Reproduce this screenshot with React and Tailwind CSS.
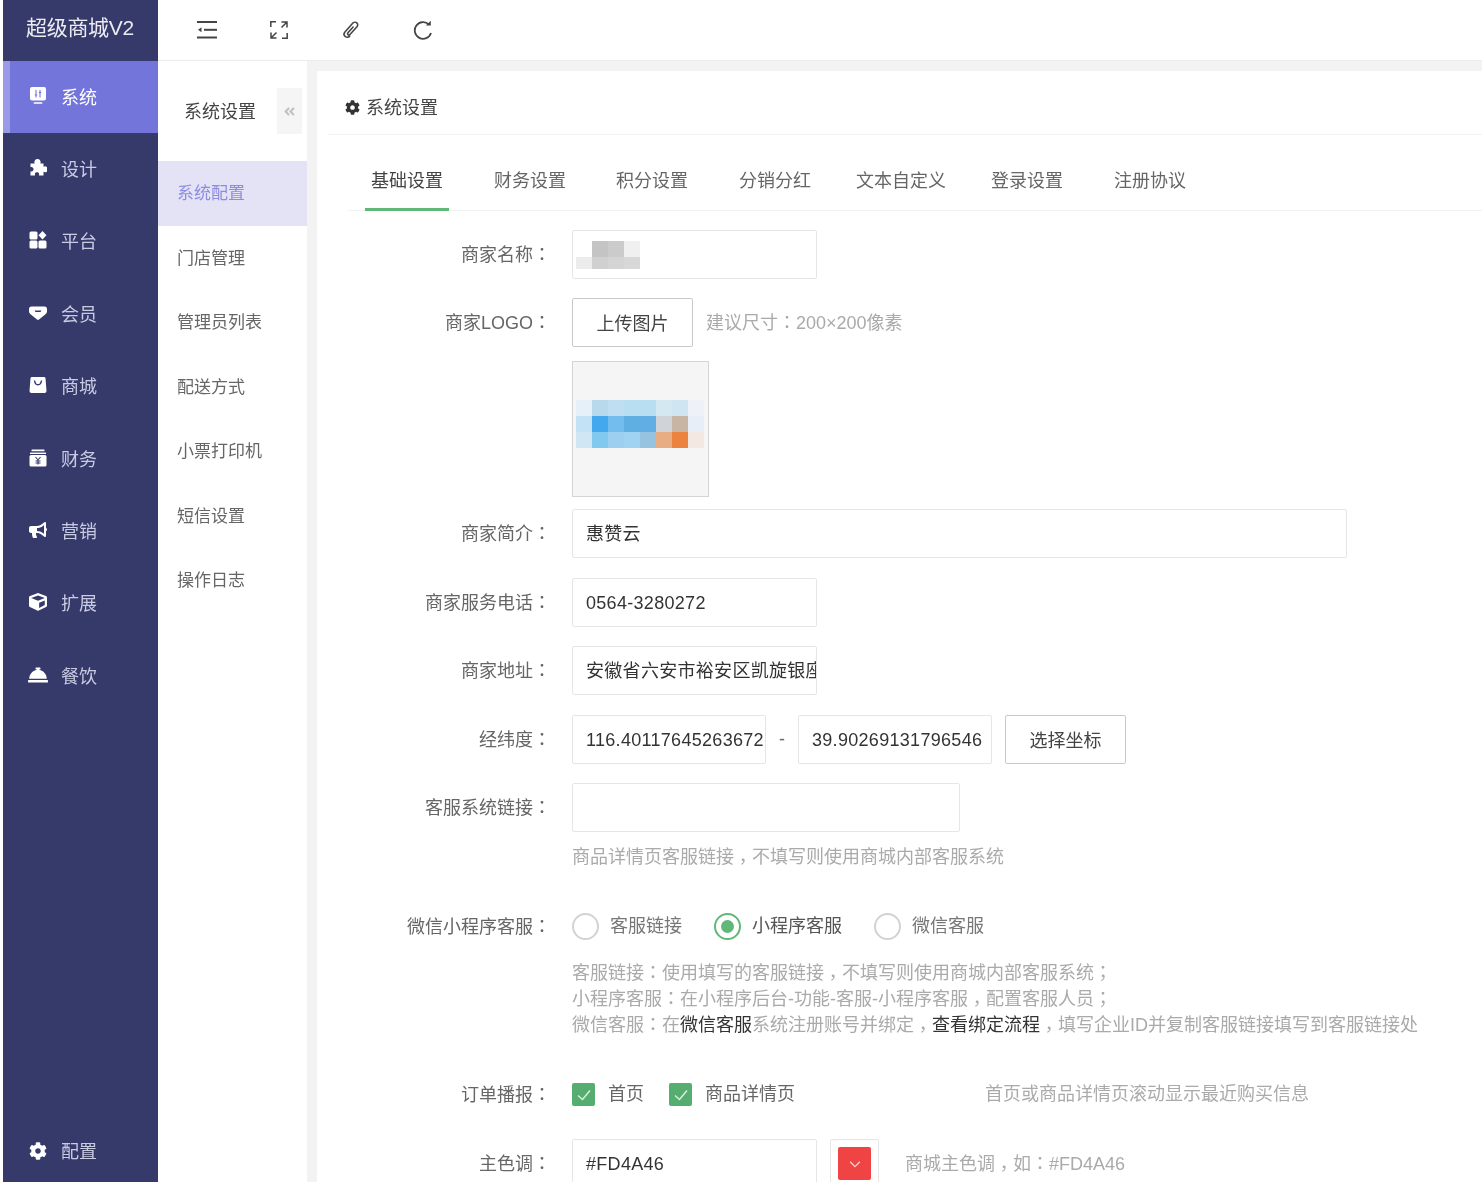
import React from "react";
import { FaBullhorn, FaCube, FaConciergeBell, FaCog, FaAngleDoubleLeft } from "react-icons/fa";

const IconMonitor = () => (
  <svg viewBox="0 0 18 18" className="w-[18px] h-[18px]">
    <rect x="1" y="0" width="16" height="13.5" rx="2" fill="#fff" />
    <rect x="4.5" y="15.2" width="9" height="1.6" rx="0.8" fill="#fff" />
    <path d="M7 3v7.500M11 3v7.500M5.800 8h2.400M9.800 5.500h2.400" stroke="#7475da" strokeWidth="1.100" fill="none" />
  </svg>
);
const IconPuzzle = () => (
  <svg viewBox="0 0 18 18" className="w-[18px] h-[18px]" fill="#fff">
    <path d="M1.500 4.500h4.200a3.100 3.100 0 1 1 5.600 0h3.200v3.300a2.900 2.900 0 1 1 0 5v3.700h-4.600c.8-2.300-.4-3.300-1.900-3.300s-2.700 1-1.900 3.300H1.500v-4.300c1.800.6 3-.3 3-1.900S3.300 7.600 1.500 8.200z" />
  </svg>
);
const IconGrid = () => (
  <svg viewBox="0 0 18 18" className="w-[18px] h-[18px]" fill="#fff">
    <rect x="0.500" y="0.500" width="8" height="8" rx="1.500" />
    <path d="M13.500 0 17.500 4.200l-4 4.300-4-4.300z" />
    <rect x="0.500" y="9.500" width="8" height="8" rx="1.500" />
    <rect x="9.500" y="9.500" width="8" height="8" rx="1.500" />
  </svg>
);
const IconGem = () => (
  <svg viewBox="0 0 20 18" className="w-[20px] h-[18px]">
    <path d="M3.500 2.500h13a2.500 2.500 0 0 1 2.500 2.500v2.500c0 1-.4 1.700-1.200 2.400L11 15.500c-.6.500-1.400.500-2 0L2.200 9.900C1.400 9.200 1 8.500 1 7.500V5a2.500 2.500 0 0 1 2.500-2.500z" fill="#fff" />
    <path d="M6.500 6.500h7l-1 1.500h-5z" fill="#363a6b" />
  </svg>
);
const IconBag = () => (
  <svg viewBox="0 0 18 18" className="w-[18px] h-[18px]">
    <path d="M3 1h12a1.500 1.500 0 0 1 1.500 1.300L17.500 15a2 2 0 0 1-2 2h-13a2 2 0 0 1-2-2L1.500 2.300A1.500 1.500 0 0 1 3 1z" fill="#fff" />
    <path d="M5.500 4.500c.4 3 1.700 4.300 3.500 4.300s3.100-1.300 3.500-4.300" stroke="#363a6b" strokeWidth="1.400" fill="none" />
  </svg>
);
const IconCash = () => (
  <svg viewBox="0 0 18 18" className="w-[18px] h-[18px]">
    <rect x="2.500" y="0.500" width="13" height="1.800" rx="0.500" fill="#fff" />
    <rect x="1" y="3.600" width="16" height="1.400" fill="#fff" />
    <rect x="0.500" y="6" width="17" height="11.500" rx="1.500" fill="#fff" />
    <path d="M6.500 8 9 11l2.500-3M9 11v4.500M6.500 12h5M6.500 14h5" stroke="#363a6b" strokeWidth="1.100" fill="none" />
  </svg>
);
const IconOutdent = () => (
  <svg viewBox="0 0 20 18" className="w-[20px] h-[18px]" fill="#444">
    <rect x="0" y="0" width="20" height="2" />
    <rect x="7" y="7.800" width="13" height="2" />
    <rect x="0" y="15.500" width="20" height="2" />
    <path d="M4.500 6.300v5L1 8.800z" />
  </svg>
);
const IconFull = () => (
  <svg viewBox="0 0 18 18" className="w-[18px] h-[18px]" fill="none" stroke="#444" strokeWidth="1.500">
    <path d="M0.800 6V0.800H6" />
    <path d="M17.200 12v5.200H12" />
    <path d="M11.500 1h5.500v5.500M17 1l-5.500 5.500" />
    <path d="M1 11.500V17h5.500M1 17l5.500-5.500" />
  </svg>
);
const IconClip = () => (
  <svg viewBox="0 0 24 24" className="w-[22px] h-[22px] shrink-0" fill="none" stroke="#444" strokeWidth="1.700" strokeLinecap="round" strokeLinejoin="round">
    <g transform="rotate(42 12 12)">
      <path d="M11.500 8v8.500a1.500 1.500 0 0 0 3 0V5a3 3 0 0 0-6 0v13a3.500 3.500 0 0 0 7 0" />
    </g>
  </svg>
);
const IconReload = () => (
  <svg viewBox="0 0 20 20" className="w-[20px] h-[20px]" fill="none" stroke="#444" strokeWidth="1.800">
    <path d="M16 4.600A8.300 8.300 0 1 0 18 13" />
    <path d="M12.800 5.600h5V0.800z" fill="#444" stroke="none" />
  </svg>
);

const navItems = [
  { label: "系统", icon: <IconMonitor />, active: true },
  { label: "设计", icon: <IconPuzzle /> },
  { label: "平台", icon: <IconGrid /> },
  { label: "会员", icon: <IconGem /> },
  { label: "商城", icon: <IconBag /> },
  { label: "财务", icon: <IconCash /> },
  { label: "营销", icon: <FaBullhorn size={18} color="#fff" /> },
  { label: "扩展", icon: <FaCube size={18} color="#fff" /> },
  { label: "餐饮", icon: <FaConciergeBell size={20} color="#fff" /> },
];
const subItems = ["门店管理", "管理员列表", "配送方式", "小票打印机", "短信设置", "操作日志"];
const tabs = [
  ["基础设置", "ml-0", true],
  ["财务设置", "ml-[39px]"],
  ["积分设置", "ml-[38px]"],
  ["分销分红", "ml-[39px]"],
  ["文本自定义", "ml-[33px]"],
  ["登录设置", "ml-[33px]"],
  ["注册协议", "ml-[39px]"],
];
const pixels = [
  ["#e6f0f8", "#b8d8ec", "#c0def2", "#b8def2", "#b8def2", "#d4e8f2", "#cfe5f1", "#eef2f8"],
  ["#c4e2f5", "#44a8ee", "#73bdee", "#5fafe2", "#60aee4", "#d0d4d8", "#c9b5a4", "#e8eef8"],
  ["#d0e6f5", "#82c9f0", "#9ccff0", "#a0d2f2", "#96c4e0", "#e9ad84", "#ec8440", "#f4e8e2"],
];

// Centred full-width punctuation, as in the picture
const T = ({ children }) => (
  <>
    {String(children).split(/([：，；])/).map((s, i) =>
      i % 2 ? (
        <span key={i} className={`inline-block leading-[0] font-['Noto_Sans_CJK_TC'] ${s === "，" ? "translate-y-[5px]" : ""}`}>{s}</span>
      ) : s
    )}
  </>
);
const Label = ({ children }) => (
  <div className="w-[234px] shrink-0 text-right text-[#666] leading-[24px] pt-[1px]"><T>{children}</T></div>
);
const Field = ({ w = "w-[245px]", value }) => (
  <div className={`${w} h-[49px] border border-[#e6e6e6] rounded-[2px] pl-[13px] pt-[2px] flex items-center text-[#333] whitespace-nowrap overflow-hidden tracking-[0.3px]`}>
    {value}
  </div>
);
const Button = ({ children, w = "w-[121px]" }) => (
  <div className={`${w} h-[49px] border border-[#c9c9c9] rounded-[2px] pt-[3px] flex items-center justify-center text-[#444] shrink-0`}>
    {children}
  </div>
);
const Row = ({ label, mt, children }) => (
  <div className={`flex items-center ${mt}`}>
    <Label>{label}</Label>
    <div className="ml-[21px] flex items-center">{children}</div>
  </div>
);
const Radio = ({ on, label, cls }) => (
  <div className={`flex items-center ${cls}`}>
    <div className={`w-[27px] h-[27px] rounded-full border-2 flex items-center justify-center ${on ? "border-[#5fb878]" : "border-[#d2d2d2]"}`}>
      {on && <div className="w-[13px] h-[13px] rounded-full bg-[#5fb878]" />}
    </div>
    <span className={`ml-[11px] pt-[1px] ${on ? "text-[#555]" : "text-[#777]"}`}>{label}</span>
  </div>
);
const Check = ({ label, cls }) => (
  <div className={`flex items-center ${cls}`}>
    <div className="w-[23px] h-[23px] rounded-[2px] bg-[#55ad70] flex items-center justify-center">
      <svg viewBox="0 0 16 16" className="w-[16px] h-[16px]" fill="none" stroke="#d8f0df" strokeWidth="1.500"><path d="M2 8.500 6.500 12.500l7.500-9" /></svg>
    </div>
    <span className="ml-[13px] text-[#666]">{label}</span>
  </div>
);

export default function App() {
  return (
    <div className="flex h-[1182px] overflow-hidden bg-white pl-[3px] text-[18px] blur-[0.6px]" style={{ fontFamily: '"Liberation Sans","Noto Sans CJK SC",sans-serif' }}>
      <aside className="w-[155px] shrink-0 bg-[#363a6b] flex flex-col">
        <div className="h-[61px] flex items-center pl-[23px] pb-[6px] text-white text-[21px] tracking-[-0.3px] opacity-90 whitespace-nowrap">超级商城V2</div>
        {navItems.map((n) => (
          <div key={n.label} className={`h-[72.4px] flex items-center ${n.active ? "bg-[#7475da] border-l-[7px] border-[#9a9be6] pl-[18px]" : "pl-[25px]"}`}>
            <span className="w-[20px] -mt-[3px] flex justify-center">{n.icon}</span>
            <span className={`ml-[13px] pt-[2px] ${n.active ? "text-white" : "text-[#c9cbe3]"}`}>{n.label}</span>
          </div>
        ))}
        <div className="mt-auto h-[62px] flex items-center pl-[25px]">
          <span className="w-[20px] flex justify-center"><FaCog size={18} color="#fff" /></span>
          <span className="ml-[13px] pt-[2px] text-[#c9cbe3]">配置</span>
        </div>
      </aside>

      <div className="flex-1 min-w-0 flex flex-col">
        <header className="h-[60px] shrink-0 flex items-center pl-[39px] gap-[52px]">
          <span className="w-[20px] flex justify-center"><IconOutdent /></span>
          <span className="w-[20px] flex justify-center"><IconFull /></span>
          <span className="w-[20px] flex justify-center"><IconClip /></span>
          <span className="w-[20px] flex justify-center"><IconReload /></span>
        </header>

        <div className="flex flex-1 min-h-0 border-t border-[#ececec]">
          <nav className="w-[149px] shrink-0 flex flex-col">
            <div className="h-[100px] flex items-center pt-[3px]">
              <span className="ml-[26px] text-[#444]">系统设置</span>
              <div className="ml-[21px] -mt-[3px] w-[25px] h-[46px] bg-[#f5f5f5] flex items-center justify-center">
                <FaAngleDoubleLeft size={13} color="#c0c0c0" />
              </div>
            </div>
            <div className="h-[65px] bg-[#e4e3f6] flex items-center pl-[19px] text-[17px] text-[#8d8ce0]">系统配置</div>
            {subItems.map((s) => (
              <div key={s} className="h-[64.5px] flex items-center pl-[19px] text-[17px] text-[#666] whitespace-nowrap">{s}</div>
            ))}
          </nav>

          <main className="flex-1 min-w-0 bg-[#f3f3f3] pl-[10px] pt-[10px]">
            <div className="bg-white h-full">
              <div className="ml-[11px] h-[64px] border-b border-[#f2f2f2] flex items-center pl-[17px] pt-[12px] text-[#444]">
                <FaCog size={15} color="#333" className="-mt-[2px]" />
                <span className="ml-[6px]">系统设置</span>
              </div>
              <div className="ml-[31px] h-[76px] border-b border-[#f2f2f2] flex pl-[17px]">
                {tabs.map(([t, m, on]) => (
                  <div key={t} className={`${m} px-[6px] h-[76px] flex items-center pt-[20px] whitespace-nowrap border-b-[3px] ${on ? "border-[#5fb878] text-[#444]" : "border-transparent text-[#666]"}`}>{t}</div>
                ))}
              </div>

              <Row label="商家名称：" mt="mt-[19px]">
                <Field value={
                  <div className="-ml-[10px] -mt-[2px] flex flex-col">
                    <div className="flex h-[16px]"><i className="w-[16px]" /><i className="w-[16px] bg-[#c4c4c4]" /><i className="w-[16px] bg-[#cbcbcb]" /><i className="w-[16px] bg-[#f0f0f0]" /></div>
                    <div className="flex h-[12px]"><i className="w-[16px] bg-[#ececec]" /><i className="w-[16px] bg-[#d0d0d0]" /><i className="w-[16px] bg-[#d4d4d4]" /><i className="w-[16px] bg-[#d8d8d8]" /></div>
                  </div>
                } />
              </Row>
              <Row label="商家LOGO：" mt="mt-[19px]">
                <Button>上传图片</Button>
                <span className="ml-[13px] leading-[24px] text-[#aaa] whitespace-nowrap"><T>建议尺寸：200×200像素</T></span>
              </Row>
              <div className="mt-[14px] ml-[255px] w-[137px] h-[136px] bg-[#f5f5f5] border border-[#d4d4d4] pt-[38px] pl-[3px]">
                {pixels.map((r, i) => (
                  <div key={i} className="flex">
                    {r.map((c, j) => <div key={j} className="w-[16px] h-[16px] shrink-0" style={{ background: c }} />)}
                  </div>
                ))}
              </div>
              <Row label="商家简介：" mt="mt-[12px]"><Field w="w-[775px]" value="惠赞云" /></Row>
              <Row label="商家服务电话：" mt="mt-[20px]"><Field value="0564-3280272" /></Row>
              <Row label="商家地址：" mt="mt-[19px]"><Field value="安徽省六安市裕安区凯旋银座" /></Row>
              <Row label="经纬度：" mt="mt-[20px]">
                <Field w="w-[194px]" value="116.40117645263672" />
                <span className="w-[32px] text-center text-[#666]">-</span>
                <Field w="w-[194px]" value="39.90269131796546" />
                <div className="ml-[13px]"><Button>选择坐标</Button></div>
              </Row>
              <Row label="客服系统链接：" mt="mt-[19px]"><Field w="w-[388px]" value="" /></Row>
              <div className="mt-[13px] ml-[255px] h-[24px] leading-[24px] text-[#aaa] whitespace-nowrap"><T>商品详情页客服链接，不填写则使用商城内部客服系统</T></div>
              <Row label="微信小程序客服：" mt="mt-[43px]">
                <Radio label="客服链接" />
                <Radio on label="小程序客服" cls="ml-[32px]" />
                <Radio label="微信客服" cls="ml-[32px]" />
              </Row>
              <div className="mt-[20px] ml-[255px] leading-[26px] text-[#aaa] whitespace-nowrap">
                <div><T>客服链接：使用填写的客服链接，不填写则使用商城内部客服系统；</T></div>
                <div><T>小程序客服：在小程序后台-功能-客服-小程序客服，配置客服人员；</T></div>
                <div><T>微信客服：在</T><span className="text-[#333]">微信客服</span><T>系统注册账号并绑定，</T><span className="text-[#333]">查看绑定流程</span><T>，填写企业ID并复制客服链接填写到客服链接处</T></div>
              </div>
              <Row label="订单播报：" mt="mt-[43px]">
                <Check label="首页" />
                <Check label="商品详情页" cls="ml-[25px]" />
                <span className="ml-[190px] text-[#aaa] whitespace-nowrap">首页或商品详情页滚动显示最近购买信息</span>
              </Row>
              <Row label="主色调：" mt="mt-[31px]">
                <Field value="#FD4A46" />
                <div className="ml-[13px] w-[49px] h-[49px] border border-[#e6e6e6] rounded-[2px] flex items-center justify-center">
                  <div className="w-[33px] h-[33px] rounded-[2px] bg-[#f04444] flex items-center justify-center">
                    <svg viewBox="0 0 16 16" className="w-[14px] h-[14px]" fill="none" stroke="#fbd0d0" strokeWidth="1.500"><path d="M2.500 5.500 8 11l5.500-5.500" /></svg>
                  </div>
                </div>
                <span className="ml-[26px] leading-[24px] text-[#aaa] whitespace-nowrap"><T>商城主色调，如：#FD4A46</T></span>
              </Row>
            </div>
          </main>
        </div>
      </div>
    </div>
  );
}
